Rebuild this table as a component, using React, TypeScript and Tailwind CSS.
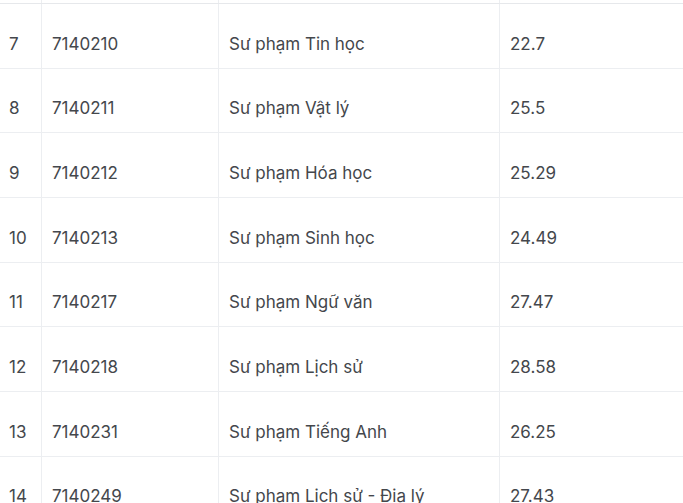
const rows = [
  ["7", "7140210", "Sư phạm Tin học", "22.7"],
  ["8", "7140211", "Sư phạm Vật lý", "25.5"],
  ["9", "7140212", "Sư phạm Hóa học", "25.29"],
  ["10", "7140213", "Sư phạm Sinh học", "24.49"],
  ["11", "7140217", "Sư phạm Ngữ văn", "27.47"],
  ["12", "7140218", "Sư phạm Lịch sử", "28.58"],
  ["13", "7140231", "Sư phạm Tiếng Anh", "26.25"],
  ["14", "7140249", "Sư phạm Lịch sử - Địa lý", "27.43"],
]

function Row({ cells }: { cells: string[] }) {
  return (
    <div className="flex h-[64.67px] border-b border-[#eceef1]">
      <div className="w-[43px] shrink-0 border-l border-r border-[#eceef1] pl-[9px] pt-[17px] flex items-center">{cells[0]}</div>
      <div className="w-[177px] shrink-0 border-r border-[#eceef1] pl-[10px] pt-[17px] flex items-center">{cells[1]}</div>
      <div className="w-[281px] shrink-0 border-r border-[#eceef1] pl-[10px] pt-[17px] flex items-center">{cells[2]}</div>
      <div className="flex-1 pl-[10px] pt-[17px] flex items-center">{cells[3]}</div>
    </div>
  )
}

export default function App() {
  return (
    <div className="w-[683px] h-[503px] overflow-hidden bg-white text-[17px] text-[#44474c]" style={{ fontFamily: "Inter, 'Noto Sans', sans-serif" }}>
      <div className="-ml-px">
        <div className="flex h-[4px] border-b border-[#e6e8eb]">
          <div className="w-[43px] shrink-0 border-l border-r border-[#eceef1]" />
          <div className="w-[177px] shrink-0 border-r border-[#eceef1]" />
          <div className="w-[281px] shrink-0 border-r border-[#eceef1]" />
          <div className="flex-1" />
        </div>
        {rows.map((r) => (
          <Row key={r[0]} cells={r} />
        ))}
      </div>
    </div>
  )
}
